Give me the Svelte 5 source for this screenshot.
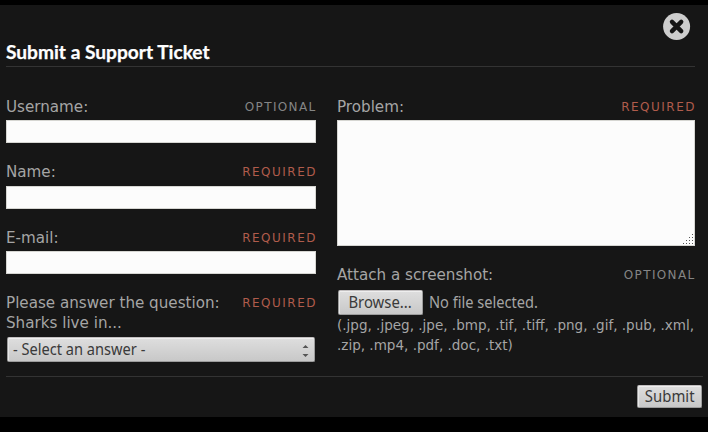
<script>
  const fields = [
    { id: 'username', label: 'Username:', note: 'OPTIONAL', height: 65 },
    { id: 'name', label: 'Name:', note: 'REQUIRED', height: 66 },
    { id: 'email', label: 'E-mail:', note: 'REQUIRED', height: 65 }
  ];
  const grip = [[9, 0], [6, 3], [9, 3], [3, 6], [6, 6], [9, 6], [0, 9], [3, 9], [6, 9], [9, 9]];
</script>

<main class="panel">
  <header>
    <h1>Submit a Support Ticket</h1>
    <button class="close" aria-label="Close">
      <svg width="28" height="28" viewBox="0 0 28 28">
        <circle cx="13.6" cy="14.5" r="13.5" fill="#cdcdcd" />
        <path d="M9 9.9L18.2 19.1M18.2 9.9L9 19.1" stroke="#151515" stroke-width="4.4" stroke-linecap="round" />
      </svg>
    </button>
  </header>

  <div class="columns">
    <section class="left">
      {#each fields as f}
        <div class="field" style="height: {f.height}px">
          <div class="row">
            <label for={f.id}>{f.label}</label>
            <span class="note" class:required={f.note === 'REQUIRED'}>{f.note}</span>
          </div>
          <input id={f.id} type="text" />
        </div>
      {/each}
      <div class="row">
        <span>Please answer the question:</span>
        <span class="note required">REQUIRED</span>
      </div>
      <div class="sub">Sharks live in...</div>
      <div class="select" role="button" tabindex="-1">
        <span class="narrow">- Select an answer -</span>
        <svg width="7" height="13" viewBox="0 0 7 13"><path d="M0.5 4L3.5 1L6.5 4ZM0.5 10L3.5 13L6.5 10Z" fill="#555" /></svg>
      </div>
    </section>

    <section class="right">
      <div class="row">
        <label for="problem">Problem:</label>
        <span class="note required">REQUIRED</span>
      </div>
      <div class="area">
        <textarea id="problem"></textarea>
        <svg class="grip" width="10" height="10" viewBox="0 0 10 10">
          {#each grip as [x, y]}<rect {x} {y} width="1" height="1" fill="#555" />{/each}
        </svg>
      </div>
      <div class="row attach">
        <span>Attach a screenshot:</span>
        <span class="note">OPTIONAL</span>
      </div>
      <div class="file">
        <button class="btn browse"><span>Browse...</span></button>
        <span class="narrow">No file selected.</span>
      </div>
      <div class="hint">(.jpg, .jpeg, .jpe, .bmp, .tif, .tiff, .png, .gif, .pub, .xml,<br />.zip, .mp4, .pdf, .doc, .txt)</div>
    </section>
  </div>

  <footer><button class="btn submit"><span>Submit</span></button></footer>
</main>

<style>
  :global(body) { background: #000; }
  :global(#app) { display: flow-root; }
  * { box-sizing: border-box; }
  .panel {
    width: 708px; height: 412px; margin-top: 5px; overflow: hidden;
    background: #161616; color: #a5a5a5;
    font: 15.15px/20px "DejaVu Sans", sans-serif; white-space: nowrap;
  }
  header {
    display: flex; justify-content: space-between; height: 62px;
    margin: 0 13px 0 6px; border-bottom: 1px solid #333;
  }
  h1 {
    margin: 35px 0 0; color: #fff;
    font: 700 18px/24px Lato, sans-serif;
    transform: scaleX(1.063); transform-origin: left;
    -webkit-text-stroke: 0.25px #fff;
  }
  .close { width: 28px; height: 28px; margin: 7px 4px 0 0; padding: 0; border: 0; background: none; }
  svg { display: block; }
  .columns { display: flex; gap: 21px; height: 309px; padding: 30px 13px 0 6px; }
  .left { width: 310px; }
  .right { width: 358px; }
  .row { display: flex; justify-content: space-between; height: 20px; }
  .note { margin-right: -0.5px; color: #858585; font-size: 12px; letter-spacing: 1.35px; }
  .required { margin-right: -1px; color: #b05c4c; letter-spacing: 1.5px; }
  input, textarea { display: block; width: 100%; border: 1px solid #d6d6d2; border-radius: 0; background: #fcfcfc; outline: 0; }
  input { height: 23px; margin-top: 3px; padding: 1px 4px; }
  .field:nth-child(2) input { margin-top: 4px; }
  .area { position: relative; margin-top: 3px; }
  textarea { height: 126px; resize: none; }
  .grip { position: absolute; right: 2px; bottom: 2px; }
  .sub { height: 20px; }
  .btn, .select {
    border: 1px solid #9c9c9c; border-top-color: #c2bfc0; border-radius: 2px;
    background: linear-gradient(#dedede, #c8c8c8); color: #3a3a3a;
    box-shadow: inset 0 1px #eee, inset 1px 0 #e6e6e6;
    font: 16px/20px "Noto Sans", sans-serif;
  }
  .select {
    display: flex; align-items: center; justify-content: space-between;
    height: 25px; margin: 4px 1px 0; padding: 0 5px; line-height: 18px;
  }
  .select svg { margin-top: 2px; }
  .narrow { transform: scaleX(0.913); transform-origin: left; }
  .select .narrow { padding-bottom: 1px; }
  .btn { display: flex; align-items: center; justify-content: center; padding: 0 0 1px; }
  .btn span { transform: scaleX(0.93); }
  .attach { margin-top: 19px; }
  .file { display: flex; align-items: center; gap: 6px; height: 25px; margin: 5px 0 0 1px; font: 16px/20px "Noto Sans", sans-serif; }
  .file .narrow { padding-bottom: 2px; }
  .browse { width: 85px; height: 25px; }
  .hint { font-size: 13.54px; line-height: 20px; }
  footer {
    display: flex; justify-content: flex-end; height: 46px;
    margin: 0 5px 0 6px; padding: 8px 1px 0 0; border-top: 1px solid #333;
  }
  .submit { width: 65px; height: 23px; }
</style>
